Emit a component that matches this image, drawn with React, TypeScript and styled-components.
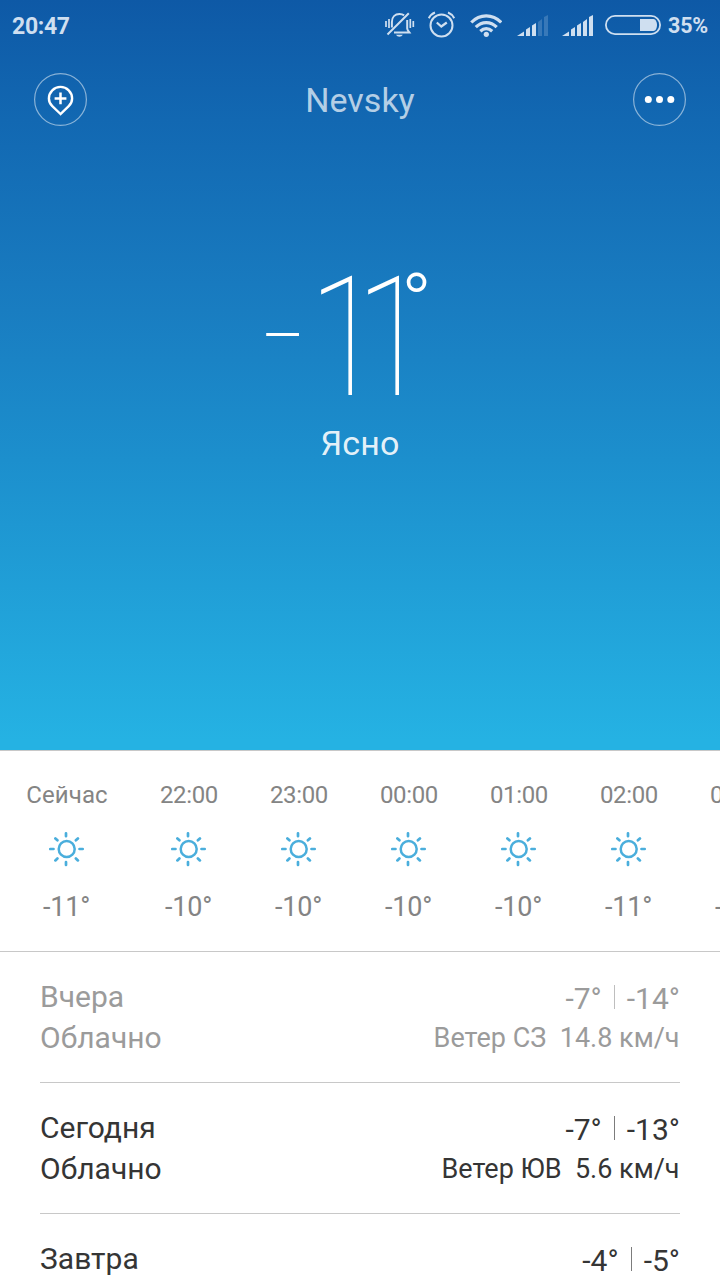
import React from "react";
import styled, { createGlobalStyle } from "styled-components";

const GlobalStyle = createGlobalStyle`
  * { box-sizing: border-box; }
  body {
    margin: 0;
    background: #fff;
    font-family: Roboto, "Liberation Sans", sans-serif;
  }
`;

const Screen = styled.main`
  width: 720px;
  height: 1280px;
  overflow: hidden;
  background: #fff;
`;

const Hero = styled.section`
  height: 750px;
  background: linear-gradient(#0e59a6 0px, #1268b2 120px, #197dc1 310px, #1c8fcd 460px, #25b2e3 740px, #25b2e3 750px);
  color: #fff;
`;

const StatusBar = styled.div`
  height: 50px;
  padding: 0 13px 0 12px;
  display: flex;
  align-items: center;
  justify-content: space-between;
  color: #cfdff0;
`;

const StatusText = styled.span<{ $size: number; $spacing: number; $drop: number }>`
  display: block;
  padding-top: ${(p) => p.$drop}px;
  font-size: ${(p) => p.$size}px;
  font-weight: 700;
  line-height: 50px;
  letter-spacing: ${(p) => p.$spacing}px;
`;

const StatusIcons = styled.div`
  display: flex;
  align-items: center;
  height: 50px;

  svg { display: block; }
`;

const IconSlot = styled.span<{ $gap: number }>`
  margin-right: ${(p) => p.$gap}px;
`;

const Percent = styled.div`
  width: 39px;
  white-space: nowrap;
`;

const Toolbar = styled.header`
  height: 99px;
  padding: 0 34px;
  display: flex;
  align-items: center;
  justify-content: space-between;
`;

const RoundButton = styled.button`
  width: 53px;
  height: 53px;
  padding: 0;
  border: 0;
  background: none;

  svg { display: block; }
`;

const City = styled.h1`
  margin: 0;
  padding-top: 2px;
  font-size: 34px;
  font-weight: 400;
  line-height: 53px;
  color: rgba(255, 255, 255, 0.7);
`;

const Temperature = styled.div`
  height: 183px;
  margin-top: 91px;
  padding-left: 262px;
  display: flex;
`;

const Glyph = styled.span<{ $width: number; $size: number; $line: number; $stretch: number; $weight: number }>`
  width: ${(p) => p.$width}px;
  flex: none;
  font-size: ${(p) => p.$size}px;
  line-height: ${(p) => p.$line}px;
  font-weight: ${(p) => p.$weight};
  white-space: nowrap;
  transform: scaleX(${(p) => p.$stretch});
  transform-origin: 0 0;
`;

const Condition = styled.div`
  font-size: 34px;
  line-height: 40px;
  letter-spacing: 0.2px;
  text-align: center;
  color: rgba(255, 255, 255, 0.9);
`;

const Hourly = styled.section`
  height: 202px;
  border-top: 1px solid #c8c8c8;
  border-bottom: 1px solid #c8c8c8;
  display: flex;
  overflow: hidden;
`;

const Hour = styled.div<{ $wide?: boolean }>`
  flex: none;
  width: ${(p) => (p.$wide ? 134 : 110)}px;
  padding-top: 28px;
  display: flex;
  flex-direction: column;
  align-items: center;
  color: #848484;

  svg { display: block; margin: 20px 0 22px; }
`;

const HourLabel = styled.span<{ $word?: boolean }>`
  font-size: 24px;
  line-height: 32px;
  letter-spacing: ${(p) => (p.$word ? 0.1 : -0.35)}px;
`;

const HourTemp = styled.span`
  margin-right: 1px;
  font-size: 27px;
  line-height: 36px;
  letter-spacing: -0.2px;
`;

const Days = styled.section`
  padding: 0 40px;
`;

const Day = styled.article<{ $past?: boolean }>`
  height: 131px;
  padding-top: 24px;
  display: flex;
  justify-content: space-between;
  border-bottom: 1px solid #c8c8c8;
  color: ${(p) => (p.$past ? "#9b9b9b" : "#353535")};
`;

const DayInfo = styled.div`
  font-size: 30px;
  line-height: 41px;
`;

const DayFigures = styled.div`
  display: flex;
  flex-direction: column;
  align-items: flex-end;
`;

const Range = styled.div`
  display: flex;
  align-items: center;
  font-size: 30px;
  line-height: 45px;
`;

const Separator = styled.i`
  width: 1px;
  height: 24px;
  margin: 0 12px 3px;
  background: currentColor;
  opacity: 0.65;
`;

const Wind = styled.div`
  margin-right: 0.5px;
  font-size: 27px;
  line-height: 35px;
  white-space: pre;
`;

const VibrateOff = () => (
  <svg width="30" height="26" viewBox="385 12 30 26" fill="none" stroke="currentColor" strokeWidth="2">
    <path d="M386 21v6M389 19v9M410.300 19v9M413.300 21v6" strokeWidth="1.700" />
    <path d="M391.900 27.500V22c0-5 3.100-7.900 7.600-7.900 1.800 0 3.400.4 4.600 1.300M407.200 20v8.500c0 1.500 1.300 2.500 2.300 4H394" />
    <path d="M387.500 34.500L408.800 13.300" />
    <path d="M396 34.800h6.800c-1.300 2.500-5.500 2.500-6.800 0z" fill="currentColor" stroke="none" />
  </svg>
);

const Alarm = () => (
  <svg width="28" height="28" viewBox="427 11 28 28" fill="none" stroke="currentColor" strokeWidth="2">
    <circle cx="441.500" cy="25.500" r="11" />
    <path d="M436.800 22.500l4.500 4 5.500-4" strokeWidth="2.200" />
    <path d="M428.800 18.200c1.300-2.700 3.400-4.600 6.200-5.700M448 12.500c2.800 1.100 4.900 3 6.200 5.700" />
  </svg>
);

const Wifi = () => (
  <svg width="32" height="26" viewBox="470 11 32 26" fill="none" stroke="currentColor" strokeWidth="3.200">
    <path d="M471.300 21.500c8.500-8.800 21.400-8.800 29.900 0M475.800 26.200c6-6.200 14.900-6.200 20.900 0M480.300 30.200c3.700-3.400 8.200-3.400 11.900 0" />
    <circle cx="486.300" cy="33.300" r="2.600" fill="currentColor" stroke="none" />
  </svg>
);

const Signal = ({ level }: { level: number }) => {
  const bars = [
    "M0 21L7 16.500V21z",
    "M9 21V14.500L13 12V21z",
    "M15 21V10.500L19 8V21z",
    "M21 21V7L25 4V21z",
    "M27 21V2L31 0V21z",
  ];
  return (
    <svg width="31" height="21" viewBox="0 0 31 21" fill="currentColor">
      {bars.map((d, i) => (
        <path key={d} d={d} opacity={i < level ? 1 : 0.22} />
      ))}
    </svg>
  );
};

const Battery = () => (
  <svg width="56" height="20" viewBox="0 0 56 20">
    <rect x="0.900" y="0.900" width="54.200" height="18.200" rx="9.100" fill="none" stroke="currentColor" strokeWidth="1.800" />
    <path d="M35 4h13.500c2 0 3.500 3 3.500 6s-1.500 6-3.500 6H35z" fill="currentColor" />
  </svg>
);

const AddPlace = () => (
  <svg width="53" height="53" viewBox="0 0 53 53" fill="none" stroke="#fff">
    <circle cx="26.500" cy="26.500" r="25.900" strokeOpacity="0.5" strokeWidth="1.200" />
    <path d="M26.500 41L18.300 33.200C16 31 14.900 28.500 14.900 25.500a11.600 11.600 0 0 1 23.200 0c0 3-1.100 5.500-3.400 7.700z" strokeWidth="2.400" />
    <path d="M26.500 19.500v11.800M20.600 25.400h11.800" strokeWidth="2.500" />
  </svg>
);

const More = () => (
  <svg width="53" height="53" viewBox="0 0 53 53" fill="#fff">
    <circle cx="26.500" cy="26.500" r="25.900" fill="none" stroke="#fff" strokeOpacity="0.5" strokeWidth="1.200" />
    <circle cx="15.300" cy="26.500" r="3.500" />
    <circle cx="26.500" cy="26.500" r="3.500" />
    <circle cx="37.800" cy="26.500" r="3.500" />
  </svg>
);

const Sun = () => (
  <svg width="36" height="36" viewBox="0 0 36 36" fill="none" stroke="#4aaedc">
    <circle cx="17.700" cy="18" r="8" strokeWidth="2.500" />
    <path
      d="M17 2.300v2.900M17 31v2.900M1.300 18h3.200M30.500 18h3.200M6.400 7.400l2 1.900M28.900 7.400l-2 1.900M6.400 29.400l2-1.900M28.900 29.400l-2-1.900"
      strokeWidth="2.700"
      strokeLinecap="round"
    />
  </svg>
);

const hours = [
  ["Сейчас", "-11°"],
  ["22:00", "-10°"],
  ["23:00", "-10°"],
  ["00:00", "-10°"],
  ["01:00", "-10°"],
  ["02:00", "-11°"],
  ["03:00", "-11°"],
];

const days = [
  { name: "Вчера", sky: "Облачно", high: "-7°", low: "-14°", wind: "Ветер СЗ  14.8 км/ч", past: true },
  { name: "Сегодня", sky: "Облачно", high: "-7°", low: "-13°", wind: "Ветер ЮВ  5.6 км/ч" },
  { name: "Завтра", sky: "", high: "-4°", low: "-5°", wind: "" },
];

export default function App() {
  return (
    <Screen>
      <GlobalStyle />
      <Hero>
        <StatusBar>
          <StatusText $size={23} $spacing={-0.3} $drop={3}>20:47</StatusText>
          <StatusIcons>
            <IconSlot $gap={12}><VibrateOff /></IconSlot>
            <IconSlot $gap={15}><Alarm /></IconSlot>
            <IconSlot $gap={15}><Wifi /></IconSlot>
            <IconSlot $gap={14}><Signal level={3} /></IconSlot>
            <IconSlot $gap={12}><Signal level={5} /></IconSlot>
            <IconSlot $gap={7}><Battery /></IconSlot>
            <Percent>
              <StatusText $size={21.5} $spacing={-0.2} $drop={1}>35%</StatusText>
            </Percent>
          </StatusIcons>
        </StatusBar>
        <Toolbar>
          <RoundButton aria-label="Добавить город"><AddPlace /></RoundButton>
          <City>Nevsky</City>
          <RoundButton aria-label="Меню"><More /></RoundButton>
        </Toolbar>
        <Temperature>
          <Glyph $width={47} $size={115} $line={186} $stretch={1.24} $weight={100}>-</Glyph>
          <Glyph $width={47} $size={167} $line={196} $stretch={0.8} $weight={100}>1</Glyph>
          <Glyph $width={45} $size={167} $line={196} $stretch={0.8} $weight={100}>1</Glyph>
          <Glyph $width={30} $size={79} $line={126} $stretch={1.04} $weight={300}>°</Glyph>
        </Temperature>
        <Condition>Ясно</Condition>
      </Hero>
      <Hourly>
        {hours.map(([label, temp], i) => (
          <Hour key={label} $wide={i === 0}>
            <HourLabel $word={i === 0}>{label}</HourLabel>
            <Sun />
            <HourTemp>{temp}</HourTemp>
          </Hour>
        ))}
      </Hourly>
      <Days>
        {days.map((day) => (
          <Day key={day.name} $past={day.past}>
            <DayInfo>
              <div>{day.name}</div>
              <div>{day.sky}</div>
            </DayInfo>
            <DayFigures>
              <Range>
                {day.high}
                <Separator />
                {day.low}
              </Range>
              <Wind>{day.wind}</Wind>
            </DayFigures>
          </Day>
        ))}
      </Days>
    </Screen>
  );
}
